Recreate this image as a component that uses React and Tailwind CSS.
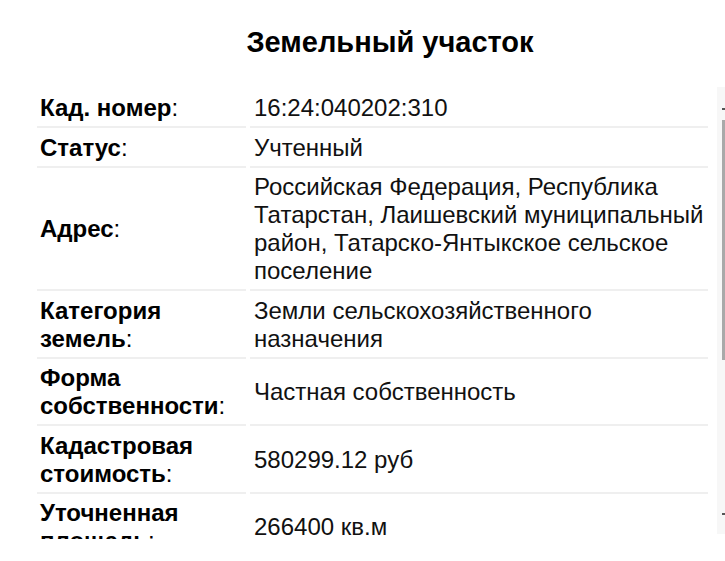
const rows = [
    { label: 'Кад. номер', value: '16:24:040202:310' },
    { label: 'Статус', value: 'Учтенный' },
    {
        label: 'Адрес',
        value: 'Российская Федерация, Республика Татарстан, Лаишевский муниципальный район, Татарско-Янтыкское сельское поселение',
    },
    { label: 'Категория земель', value: 'Земли сельскохозяйственного назначения' },
    { label: 'Форма собственности', value: 'Частная собственность' },
    { label: 'Кадастровая стоимость', value: '580299.12 руб' },
    { label: 'Уточненная площадь', value: '266400 кв.м' },
];

function Scrollbar() {
    return (
        <div className="relative h-[447px] w-[8px] bg-[#f7f7f7]">
            <div className="absolute left-[5px] top-[21px] h-[2px] w-[3px] bg-[#555]" />
            <div className="absolute left-[5px] top-[33px] h-[240px] w-[3px] bg-[#a9a9a9]" />
            <div className="absolute left-[5px] top-[426px] h-[2px] w-[3px] bg-[#555]" />
        </div>
    );
}

export default function App() {
    return (
        <div
            className="h-[561px] w-[725px] overflow-hidden bg-white text-black"
            style={{ fontFamily: '"Liberation Sans", Arial, sans-serif' }}
        >
            <h1 className="pl-[55px] pt-[27px] text-center text-[29px] font-bold leading-[30px]">
                Земельный участок
            </h1>

            <div className="mt-[30px] flex h-[452px]">
                <div className="flex-1 overflow-hidden pl-[33px] pr-[1px] pt-[1.5px]">
                    <table className="w-full border-separate border-spacing-[4px] text-[24px] leading-[28px]">
                        <tbody>
                            {rows.map((row) => (
                                <tr key={row.label}>
                                    <td className="w-[209px] border-b-2 border-[#efefef] pb-[4px] pl-[3px] pt-[1.5px] align-middle">
                                        <b>{row.label}</b>:
                                    </td>
                                    <td className="border-b-2 border-[#efefef] pb-[4px] pl-[4px] pt-[1.5px] align-middle text-[#111]">
                                        {row.value}
                                    </td>
                                </tr>
                            ))}
                        </tbody>
                    </table>
                </div>
                <div className="ml-[4px]">
                    <Scrollbar />
                </div>
            </div>
        </div>
    );
}
